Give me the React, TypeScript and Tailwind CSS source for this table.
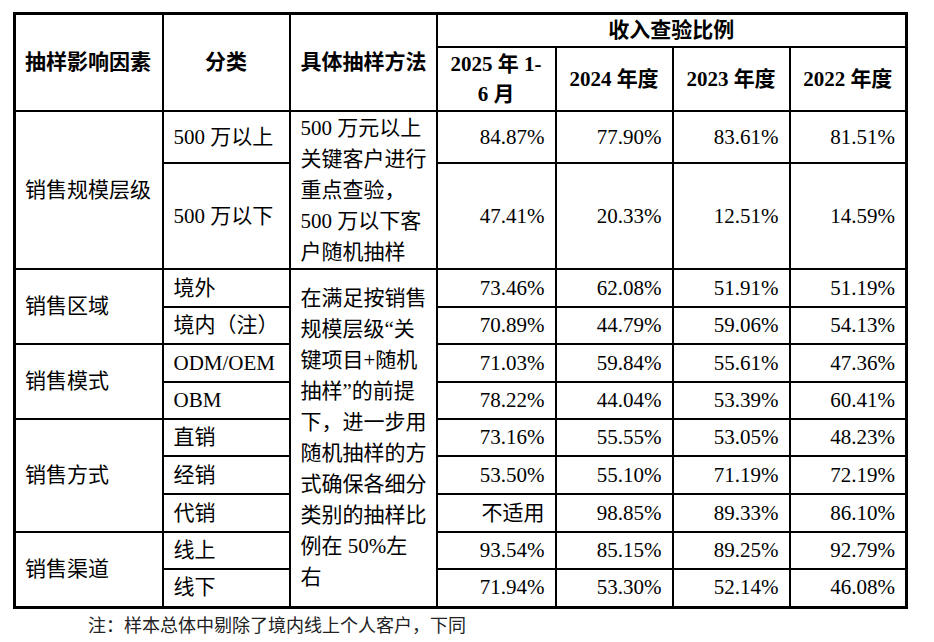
import React from "react";

const FONT = { fontFamily: "'Liberation Serif', 'Noto Sans CJK SC', serif" };

type Row = {
  h: string;
  cat?: { text: string; span: number };
  sub: string;
  method?: { lines: string[]; span: number };
  vals: string[];
};

const rows: Row[] = [
  {
    h: "h-[52px]",
    cat: { text: "销售规模层级", span: 2 },
    sub: "500 万以上",
    method: { lines: ["500 万元以上", "关键客户进行", "重点查验，", "500 万以下客", "户随机抽样"], span: 2 },
    vals: ["84.87%", "77.90%", "83.61%", "81.51%"],
  },
  { h: "h-[106px]", sub: "500 万以下", vals: ["47.41%", "20.33%", "12.51%", "14.59%"] },
  {
    h: "h-[38px]",
    cat: { text: "销售区域", span: 2 },
    sub: "境外",
    method: {
      lines: [
        "在满足按销售",
        "规模层级“关",
        "键项目+随机",
        "抽样”的前提",
        "下，进一步用",
        "随机抽样的方",
        "式确保各细分",
        "类别的抽样比",
        "例在 50%左",
        "右",
      ],
      span: 9,
    },
    vals: ["73.46%", "62.08%", "51.91%", "51.19%"],
  },
  { h: "h-[37px]", sub: "境内（注）", vals: ["70.89%", "44.79%", "59.06%", "54.13%"] },
  { h: "h-[38px]", cat: { text: "销售模式", span: 2 }, sub: "ODM/OEM", vals: ["71.03%", "59.84%", "55.61%", "47.36%"] },
  { h: "h-[37px]", sub: "OBM", vals: ["78.22%", "44.04%", "53.39%", "60.41%"] },
  { h: "h-[37px]", cat: { text: "销售方式", span: 3 }, sub: "直销", vals: ["73.16%", "55.55%", "53.05%", "48.23%"] },
  { h: "h-[38px]", sub: "经销", vals: ["53.50%", "55.10%", "71.19%", "72.19%"] },
  { h: "h-[38px]", sub: "代销", vals: ["不适用", "98.85%", "89.33%", "86.10%"] },
  { h: "h-[37px]", cat: { text: "销售渠道", span: 2 }, sub: "线上", vals: ["93.54%", "85.15%", "89.25%", "92.79%"] },
  { h: "h-[38px]", sub: "线下", vals: ["71.94%", "53.30%", "52.14%", "46.08%"] },
];

const cell = "border-2 border-black px-[10px] py-0 align-middle whitespace-nowrap";

export default function App() {
  return (
    <div className="min-h-[642px] w-[934px] bg-white text-black" style={FONT}>
      <div className="pl-[13px] pt-[12px]">
        <table className="table-fixed border-collapse border-[3px] border-black w-[895px] text-[21px] leading-[31px]">
          <colgroup>
            <col className="w-[148px]" />
            <col className="w-[127px]" />
            <col className="w-[147px]" />
            <col className="w-[119px]" />
            <col className="w-[117px]" />
            <col className="w-[117px]" />
            <col className="w-[117px]" />
          </colgroup>
          <thead>
            <tr className="h-[33px]">
              <th rowSpan={2} className={`${cell} text-left font-bold pl-[9px]`}>抽样影响因素</th>
              <th rowSpan={2} className={`${cell} text-center font-bold`}>分类</th>
              <th rowSpan={2} className={`${cell} text-left font-bold`}>具体抽样方法</th>
              <th colSpan={4} className={`${cell} text-center font-bold`}>收入查验比例</th>
            </tr>
            <tr className="h-[64px]">
              <th className={`${cell} text-center font-bold leading-[30px]`}>
                2025 年 1-
                <br />6 月
              </th>
              <th className={`${cell} text-center font-bold`}>2024 年度</th>
              <th className={`${cell} text-center font-bold`}>2023 年度</th>
              <th className={`${cell} text-center font-bold`}>2022 年度</th>
            </tr>
          </thead>
          <tbody>
            {rows.map((r, i) => (
              <tr key={i} className={r.h}>
                {r.cat && (
                  <td rowSpan={r.cat.span} className={`${cell} text-left pl-[9px]`}>
                    {r.cat.text}
                  </td>
                )}
                <td className={`${cell} text-left`}>{r.sub}</td>
                {r.method && (
                  <td rowSpan={r.method.span} className={`${cell} text-left`}>
                    {r.method.lines.map((l, j) => (
                      <div key={j}>{l}</div>
                    ))}
                  </td>
                )}
                {r.vals.map((v, j) => (
                  <td key={j} className={`${cell} text-right`}>
                    {v}
                  </td>
                ))}
              </tr>
            ))}
          </tbody>
        </table>
        <div className="pl-[75px] pt-[4px] text-[18px] leading-[26px] text-[#222]">
          注：样本总体中剔除了境内线上个人客户，下同
        </div>
      </div>
    </div>
  );
}
